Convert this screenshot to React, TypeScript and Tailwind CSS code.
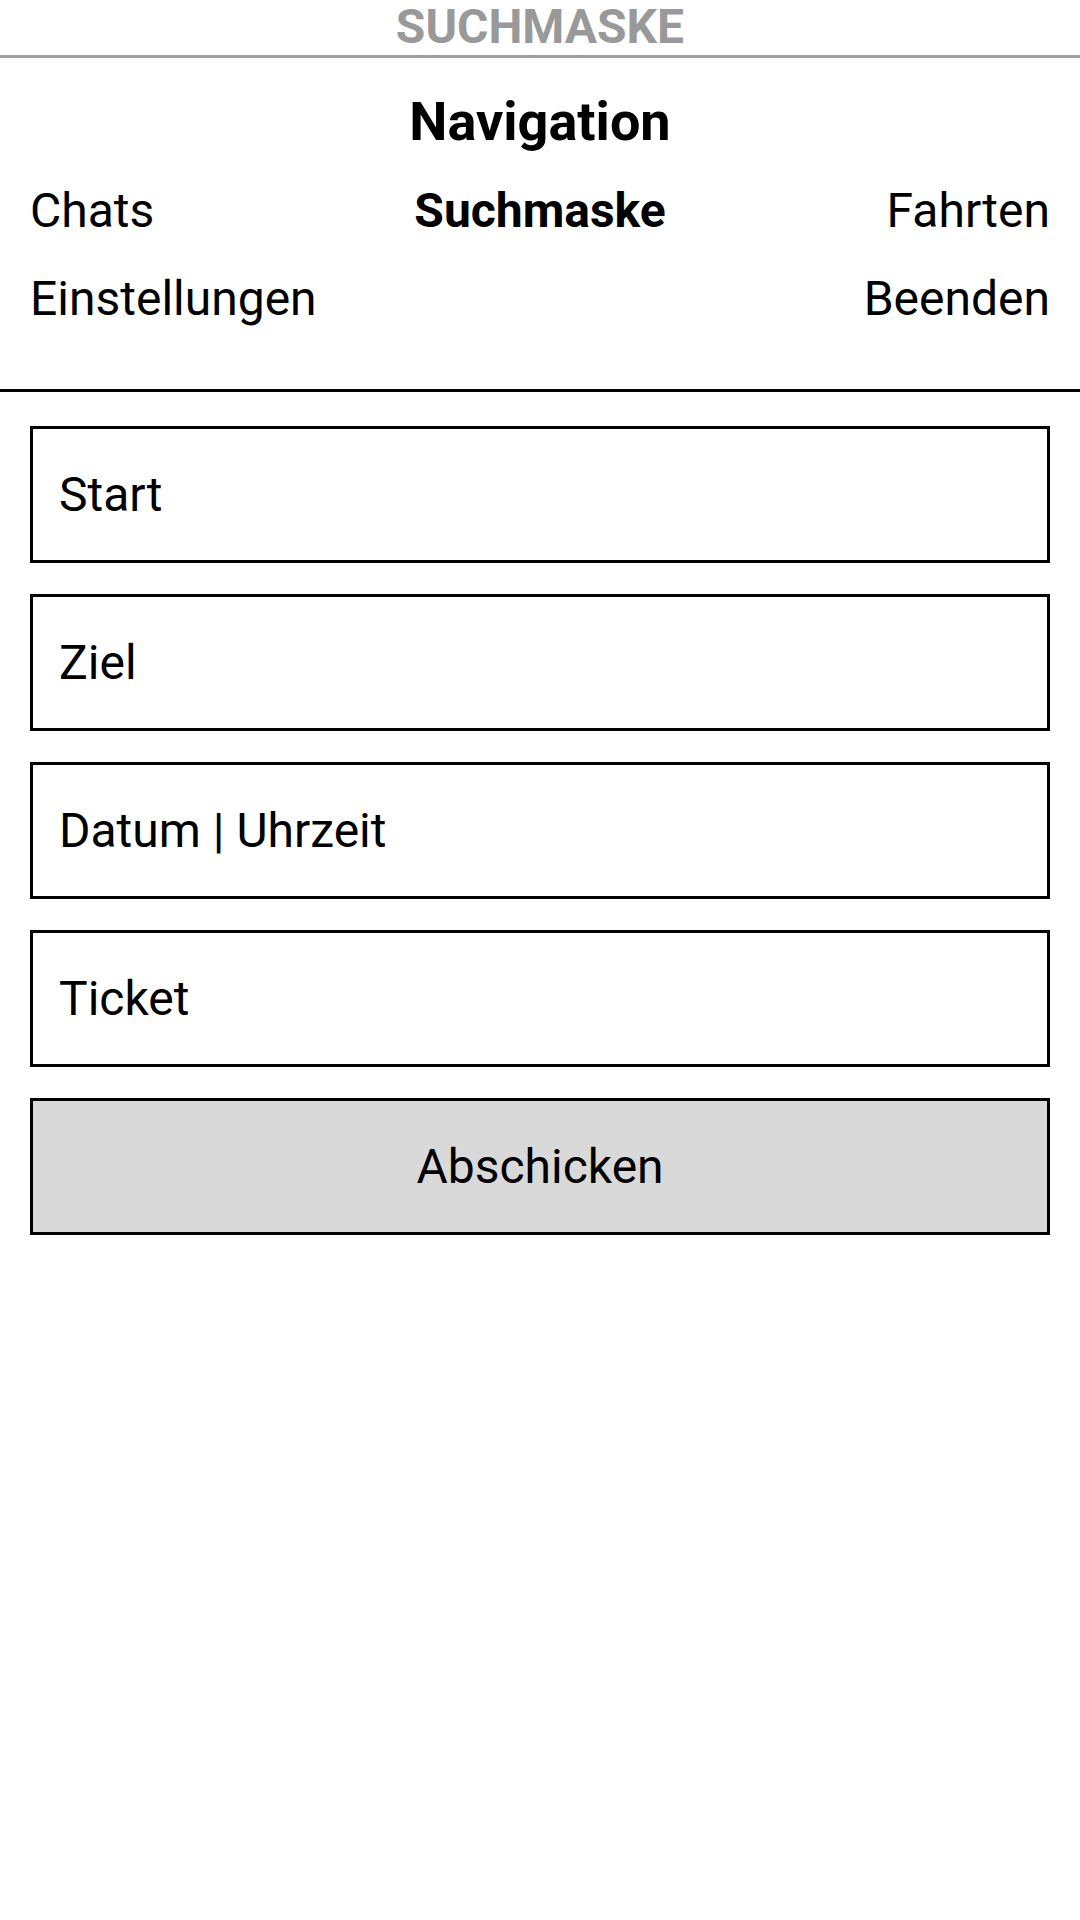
const fields = ['Start', 'Ziel', 'Datum | Uhrzeit', 'Ticket'];

/** Suchmaske-Seite mit Navigation und Formular */
export default function App() {
  return (
    <div className="min-h-[1920px] w-[1080px] bg-white font-['Roboto','Liberation_Sans',sans-serif] text-black">
      {/* Kopfzeile */}
      <div className="flex h-[58px] items-center justify-center border-b-[3px] border-[#a0a0a0] pb-[1px]">
        <span className="text-[48px] font-bold leading-none text-[#999999]">SUCHMASKE</span>
      </div>

      {/* Navigation */}
      <div className="border-b-[3px] border-black px-[30px] pb-[46px]">
        <h2 className="mt-[37px] text-center text-[54px] font-bold leading-[54px]">Navigation</h2>
        <div className="mt-[18px] grid grid-cols-3 text-[48px] leading-[88px]">
          <span className="justify-self-start">Chats</span>
          <span className="justify-self-center font-bold">Suchmaske</span>
          <span className="justify-self-end">Fahrten</span>
          <span className="justify-self-start whitespace-nowrap">Einstellungen</span>
          <span />
          <span className="justify-self-end">Beenden</span>
        </div>
      </div>

      {/* Formular */}
      <div className="flex flex-col gap-[31px] px-[30px] pt-[34px]">
        {fields.map(f => (
          <div
            key={f}
            className="flex h-[137px] items-center border-[3px] border-black pl-[26px] text-[48px] leading-none"
          >
            {f}
          </div>
        ))}
        <button className="flex h-[137px] items-center justify-center border-[3px] border-black bg-[#d9d9d9] text-[48px] leading-none">
          Abschicken
        </button>
      </div>
    </div>
  );
}
